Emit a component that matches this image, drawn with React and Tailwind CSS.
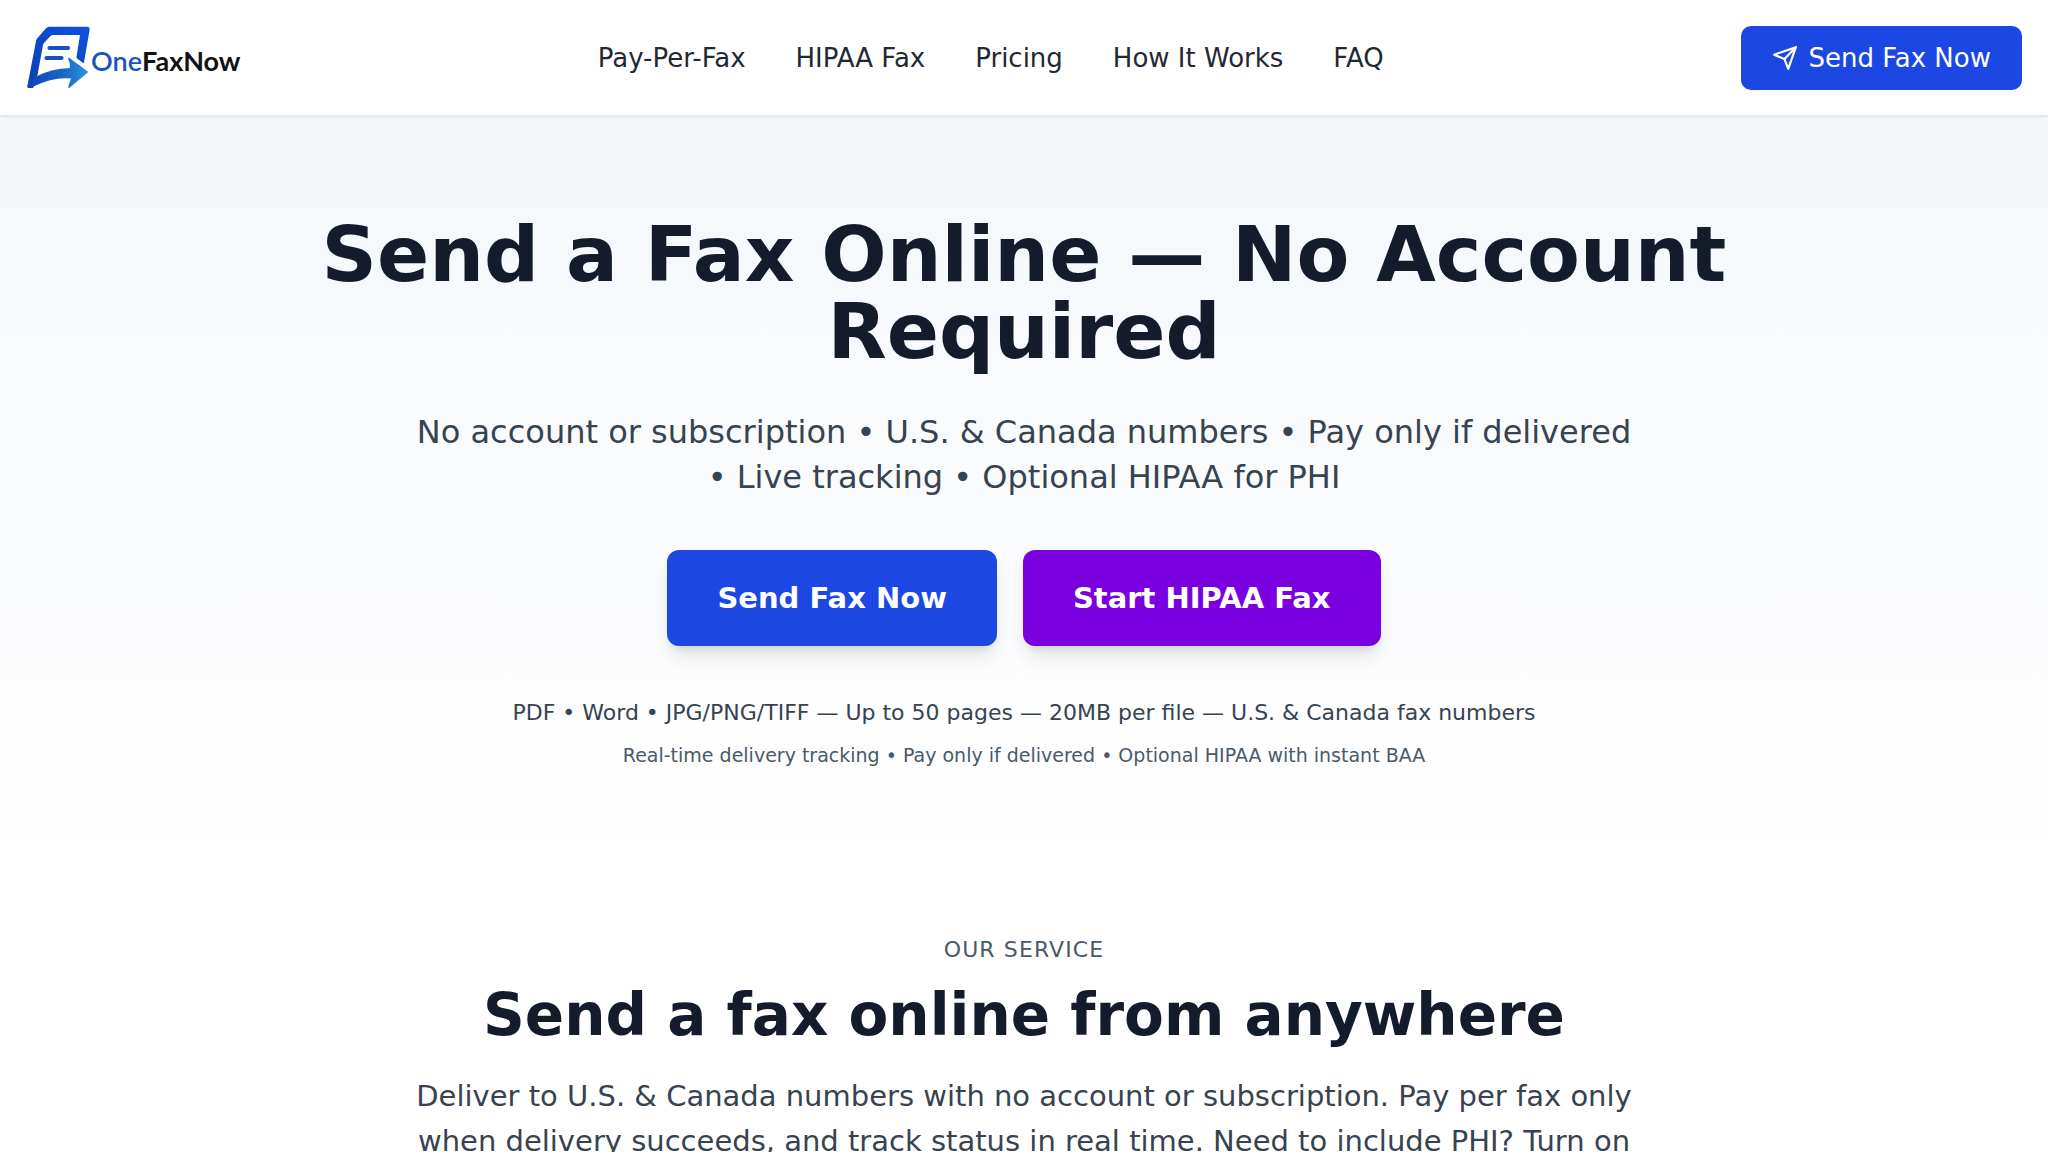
const links = ["Pay-Per-Fax", "HIPAA Fax", "Pricing", "How It Works", "FAQ"];

function Logo() {
  return (
    <a href="#home" aria-label="OneFaxNow" className="flex w-[214px] items-center">
      <svg viewBox="-1 0 64 64" className="h-16 w-16 shrink-0" aria-hidden="true">
        <defs>
          <linearGradient id="sheet" x1="0" y1="1" x2="1" y2="0">
            <stop offset="0" stopColor="#0c3fae" />
            <stop offset="1" stopColor="#0d52e2" />
          </linearGradient>
          <linearGradient id="arrow" x1="0" y1="0" x2="1" y2="0">
            <stop offset="0" stopColor="#0b43b8" />
            <stop offset="0.6" stopColor="#1767c8" />
            <stop offset="1" stopColor="#2a93dc" />
          </linearGradient>
        </defs>
        <path
          fill="url(#sheet)"
          d="M22 .7H60Q63 .7 62.600 4L57 36.500Q56.700 37.500 55.800 36.800L50 32.500Q49.400 32 49.500 31L53 9H26Q24.500 9 23.500 10L17 17Q16.300 17.800 16 19L10.500 49L6 62H1.500Q0 62 .4 60L9 15Q9.400 13.200 10.500 12L19 2.200Q20.300 .7 22 .7Z"
        />
        <path
          fill="url(#arrow)"
          d="M2 62Q0 62 1 58L8 51Q24 42.500 43 42Q43.500 37 41.200 33Q40.800 31 42.500 32L60.500 45.200Q61.300 46 60.500 46.800L42.500 61.800Q41 62.500 41.300 60.500L44 52.500Q25 51 4 61.600Z"
        />
        <path stroke="#1550c4" strokeWidth="4.200" strokeLinecap="round" d="M22.500 22H41M19.500 32H34.500" />
      </svg>
      <span className="ml-px pt-[6px] font-[Lato] text-[27px] leading-8 font-bold text-[#111]">
        <span className="font-semibold text-[#1a55bd]">One</span>FaxNow
      </span>
    </a>
  );
}

function PaperPlane() {
  return (
    <svg
      viewBox="0 0 24 24"
      className="size-[26px]"
      fill="none"
      stroke="currentColor"
      strokeWidth="2"
      strokeLinecap="round"
      strokeLinejoin="round"
      aria-hidden="true"
    >
      <path d="M22 2 15 22 11.500 13 2 9Z" />
      <path d="M22 2 11.500 13" />
    </svg>
  );
}

export default function App() {
  return (
    <div className="min-h-screen bg-white font-['DejaVu_Sans',sans-serif] text-[#141c2b]">
      <header className="relative flex h-[115px] items-center justify-between bg-white px-[26px] shadow-[0_1px_4px_rgba(0,0,0,0.12)]">
        <Logo />
        <nav className="flex gap-[50px] text-[26px] leading-9 text-[#1f2933]">
          {links.map((l) => (
            <a key={l} href="#section">{l}</a>
          ))}
        </nav>
        <button className="flex h-16 items-center gap-[10px] rounded-[10px] bg-[#1c47e3] px-[31px] text-[26px] leading-9 text-white">
          <PaperPlane />
          Send Fax Now
        </button>
      </header>

      <main>
        <section className="flex flex-col items-center bg-linear-to-b from-[#f4f8fb] via-[#fafbfd] to-white px-8 pt-[101px] pb-[101px] text-center">
          <h1 className="max-w-[1434px] text-[77px] leading-[77px] font-bold">
            Send a Fax Online — No Account Required
          </h1>
          <p className="mt-10 max-w-[1229px] text-[32px] leading-[45px] text-[#37434f]">
            No account or subscription • U.S. &amp; Canada numbers • Pay only if delivered • Live tracking • Optional HIPAA for PHI
          </p>
          <div className="mt-[50px] flex gap-[26px] text-[29px] leading-10 font-bold text-white">
            <button className="h-24 rounded-xl bg-[#1c47e3] px-[50px] shadow-[0_13px_19px_-4px_rgba(0,0,0,0.12),0_5px_8px_-5px_rgba(0,0,0,0.12)]">
              Send Fax Now
            </button>
            <button className="h-24 rounded-xl bg-[#7a00df] px-[50px] shadow-[0_13px_19px_-4px_rgba(0,0,0,0.12),0_5px_8px_-5px_rgba(0,0,0,0.12)]">
              Start HIPAA Fax
            </button>
          </div>
          <p className="mt-[51px] text-[22px] leading-8 text-[#37434f]">
            PDF • Word • JPG/PNG/TIFF — Up to 50 pages — 20MB per file — U.S. &amp; Canada fax numbers
          </p>
          <p className="mt-3 text-[19px] leading-7 text-[#4a5a68]">
            Real-time delivery tracking • Pay only if delivered • Optional HIPAA with instant BAA
          </p>
        </section>

        <section className="flex flex-col items-center px-8 pt-[64px] text-center">
          <p className="text-[22px] leading-8 tracking-wider text-[#4a5a68] uppercase">Our Service</p>
          <h2 className="mt-[17px] text-[58px] leading-[64px] font-bold">Send a fax online from anywhere</h2>
          <p className="mt-[27px] max-w-[1229px] text-[29px] leading-[45px] text-[#37434f]">
            Deliver to U.S. &amp; Canada numbers with no account or subscription. Pay per fax only when delivery
            succeeds, and track status in real time. Need to include PHI? Turn on
          </p>
        </section>
      </main>
    </div>
  );
}
